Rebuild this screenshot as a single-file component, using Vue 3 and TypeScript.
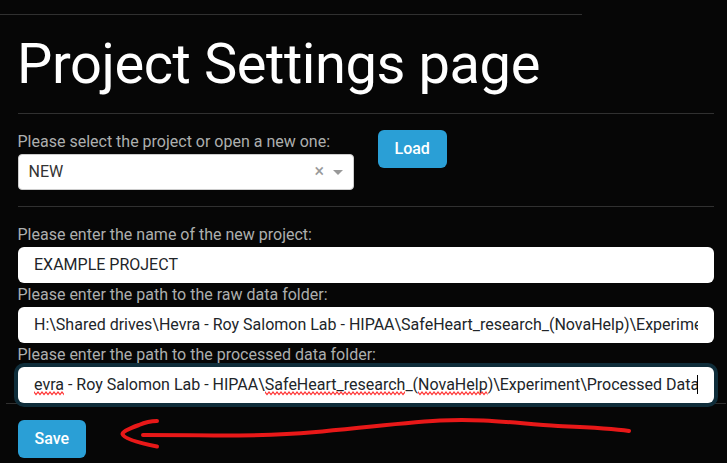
<script setup lang="ts">
import { ref } from 'vue'

interface Segment {
  text: string
  misspelled?: boolean
}

const project = ref('NEW')
const projectName = ref('EXAMPLE PROJECT')
const rawPath = ref('H:\\Shared drives\\Hevra - Roy Salomon Lab - HIPAA\\SafeHeart_research_(NovaHelp)\\Experime')
const processedPath: Segment[] = [
  { text: 'evra', misspelled: true },
  { text: ' - Roy Salomon Lab - HIPAA\\' },
  { text: 'SafeHeart_research', misspelled: true },
  { text: '_(' },
  { text: 'NovaHelp', misspelled: true },
  { text: ')\\Experiment\\Processed Data' },
]
</script>

<template>
  <main class="page">
    <div class="rule rule-top"></div>
    <div class="content">
      <h1>Project Settings page</h1>
      <div class="rule"></div>
      <section class="chooser">
        <div class="select-group">
          <div class="label">Please select the project or open a new one:</div>
          <div class="select">
            <span class="value">{{ project }}</span>
            <span class="clear">×</span>
            <span class="caret"></span>
          </div>
        </div>
        <button class="btn load" type="button">Load</button>
      </section>
      <div class="rule"></div>
      <section class="fields">
        <div class="label">Please enter the name of the new project:</div>
        <div class="input"><div class="clip">{{ projectName }}</div></div>
        <div class="label">Please enter the path to the raw data folder:</div>
        <div class="input"><div class="clip">{{ rawPath }}</div></div>
        <div class="label">Please enter the path to the processed data folder:</div>
        <div class="input focused">
          <div class="clip"><span v-for="(s, i) in processedPath" :key="i" class="seg">{{ s.text }}<svg v-if="s.misspelled" class="squiggle" aria-hidden="true"><defs><pattern :id="`wave${i}`" width="4" height="5" patternUnits="userSpaceOnUse"><path d="M-2 3.500 L0 1 L2 3.500 L4 1 L6 3.500" /></pattern></defs><rect width="100%" height="5" :fill="`url(#wave${i})`" /></svg></span></div>
          <span class="cursor"></span>
        </div>
      </section>
    </div>
    <div class="rule rule-bottom"></div>
    <footer class="actions">
      <button class="btn save" type="button">Save</button>
    </footer>
    <svg class="arrow" viewBox="0 0 727 63" aria-hidden="true">
      <path d="M157 21 Q148 21 139 25 Q122 31 122.500 34 Q124 40 157 46.500" />
      <path d="M143 35 C173 35 198 35 220 35.500 C260 35.500 290 34.500 313 32.300 C368 27 400 23 440 20.500 C485 18 520 24 558 26 C595 27.500 610 28 629 31" />
    </svg>
  </main>
</template>

<style>
html,
body {
  margin: 0;
  background: #060606;
}
</style>

<style scoped>
.page {
  position: relative;
  box-sizing: border-box;
  width: 727px;
  height: 463px;
  padding-top: 14px;
  overflow: hidden;
  background: #060606;
  color: #adafae;
  font: 400 16px/24px Roboto, sans-serif;
}

.rule {
  height: 1px;
  background: #303030;
}

.rule-top {
  width: 582px;
}

.content {
  padding: 0 13px 0 18px;
}

h1 {
  margin: 0 0 0 -1px;
  padding: 16px 0 15px;
  color: #fff;
  font-size: 56px;
  font-weight: 400;
  line-height: 67px;
  letter-spacing: -0.42px;
}

.chooser {
  display: flex;
  align-items: flex-start;
  gap: 24px;
  padding: 16px 0;
}

.select-group {
  width: 336px;
}

.label {
  height: 24px;
  margin-left: -0.5px;
  white-space: nowrap;
}

.select {
  display: flex;
  align-items: center;
  box-sizing: border-box;
  height: 36px;
  padding: 0 10px 0 9.5px;
  border: 1px solid #ccc;
  border-radius: 4px;
  background: #fff;
  color: #333;
}

.value {
  flex: 1;
}

.clear {
  margin: -2px 9px 0 0;
  color: #999;
  font-size: 18px;
}

.caret {
  border: 5px solid transparent;
  border-top-color: #999;
  border-bottom: 0;
}

.btn {
  box-sizing: border-box;
  height: 38px;
  padding: 0 0 0 16.5px;
  border: 0;
  border-radius: 6px;
  background: #2a9fd6;
  color: #fff;
  font: 500 16px/38px Roboto, sans-serif;
  text-align: left;
}

.load {
  width: 69px;
}

.save {
  width: 68px;
}

.fields {
  padding-top: 16px;
}

.input {
  position: relative;
  box-sizing: border-box;
  height: 36px;
  padding: 6px 16px;
  border-radius: 6px;
  background: #fff;
  color: #212529;
}

.focused {
  box-shadow: 0 0 0 4px #0f2d3a;
}

.clip {
  overflow: hidden;
  white-space: pre;
}

.seg {
  position: relative;
}

.squiggle {
  position: absolute;
  left: 0;
  top: 16px;
  width: 100%;
  height: 5px;
}

.squiggle path {
  fill: none;
  stroke: #f33;
  stroke-width: 1.2;
}

.cursor {
  position: absolute;
  right: 16px;
  top: 8px;
  width: 1px;
  height: 19px;
  background: #000;
}

.rule-bottom {
  margin: 0 1px 0 6px;
}

.actions {
  padding: 16px 18px;
}

.arrow {
  position: absolute;
  left: 0;
  top: 400px;
  width: 727px;
  height: 63px;
  fill: none;
  stroke: #e81818;
  stroke-width: 4;
  stroke-linecap: round;
  stroke-linejoin: round;
}
</style>
